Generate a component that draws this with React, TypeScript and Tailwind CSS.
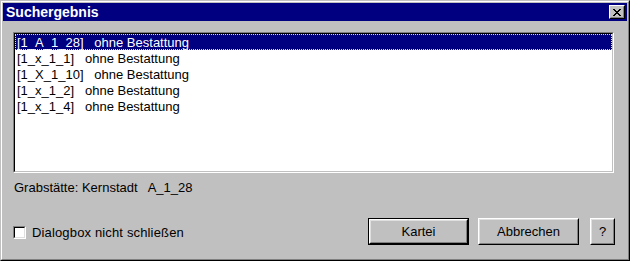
import React from "react";

const rows = [
  "[1_A_1_28]   ohne Bestattung",
  "[1_x_1_1]   ohne Bestattung",
  "[1_X_1_10]   ohne Bestattung",
  "[1_x_1_2]   ohne Bestattung",
  "[1_x_1_4]   ohne Bestattung",
];

function Win95Button({
  children,
  isDefault,
  className = "",
}: {
  children: React.ReactNode;
  isDefault?: boolean;
  className?: string;
}) {
  const inner = (
    <div className="h-full w-full border border-t-white border-l-white border-b-black border-r-black">
      <div className="flex h-full w-full items-center justify-center border border-t-[#dfdfdf] border-l-[#dfdfdf] border-b-[#808080] border-r-[#808080] bg-[#c0c0c0] text-[13px] text-black">
        {children}
      </div>
    </div>
  );
  if (isDefault) {
    return <div className={`border border-black ${className}`}>{inner}</div>;
  }
  return <div className={className}>{inner}</div>;
}

export default function App() {
  return (
    <div
      className="h-[261px] w-[630px] overflow-hidden bg-[#c0c0c0]"
      style={{ fontFamily: '"Liberation Sans", Arial, sans-serif' }}
    >
      {/* window frame */}
      <div className="h-full w-full border border-t-[#c0c0c0] border-l-[#c0c0c0] border-b-black border-r-black">
        <div className="flex h-full w-full flex-col border border-t-white border-l-white border-b-[#808080] border-r-[#808080] p-px">
          {/* title bar */}
          <div className="flex h-[18px] items-center justify-between bg-[#000080] pl-[3px] pr-[2px]">
            <span className="text-[14px] font-bold leading-[18px] text-white">Suchergebnis</span>
            <div className="h-[14px] w-[16px] border border-t-white border-l-white border-b-black border-r-black">
              <div className="flex h-full w-full items-center justify-center border border-t-[#c0c0c0] border-l-[#c0c0c0] border-b-[#808080] border-r-[#808080] bg-[#c0c0c0]">
                <svg width="8" height="7" viewBox="0 0 8 7">
                  <path
                    d="M0 0h2v1h1v1h2V1h1V0h2v1H7v1H6v1H5v1h1v1h1v1h1v1H6V6H5V5H3v1H2v1H0V6h1V5h1V4h1V3H2V2H1V1H0z"
                    fill="#000"
                  />
                </svg>
              </div>
            </div>
          </div>

          {/* body */}
          <div className="flex flex-1 flex-col px-[10px] pt-[11px]">
            {/* list box */}
            <div className="h-[141px] w-[601px] border border-t-[#808080] border-l-[#808080] border-b-white border-r-white">
              <div className="h-full w-full border border-t-black border-l-black border-b-[#c0c0c0] border-r-[#c0c0c0] bg-white">
                {rows.map((r, i) => (
                  <div
                    key={r}
                    className={`flex h-[16px] items-center whitespace-pre pl-[1px] pt-[1px] text-[13px] ${
                      i === 0
                        ? "border border-dotted border-[#ffff00] bg-[#000080] text-white"
                        : "border border-transparent text-black"
                    }`}
                  >
                    {r}
                  </div>
                ))}
              </div>
            </div>

            <div className="mt-[7px] whitespace-pre pl-[1px] text-[13px] leading-[16px] text-black">
              Grabstätte: Kernstadt   A_1_28
            </div>

            <div className="mt-[22px] flex items-start">
              <div className="mt-[8px] flex items-center">
                <div className="h-[13px] w-[13px] border border-t-[#808080] border-l-[#808080] border-b-white border-r-white">
                  <div className="h-full w-full border border-t-black border-l-black border-b-[#dfdfdf] border-r-[#dfdfdf] bg-white" />
                </div>
                <span className="ml-[6px] text-[13px] leading-[13px] tracking-[0.15px] text-black">
                  Dialogbox nicht schließen
                </span>
              </div>
              <div className="ml-auto mr-[2px] flex">
                <Win95Button isDefault className="h-[27px] w-[101px]">
                  Kartei
                </Win95Button>
                <Win95Button className="ml-[9px] h-[27px] w-[101px]">Abbrechen</Win95Button>
                <Win95Button className="ml-[11px] h-[27px] w-[25px]">?</Win95Button>
              </div>
            </div>
          </div>
        </div>
      </div>
    </div>
  );
}
